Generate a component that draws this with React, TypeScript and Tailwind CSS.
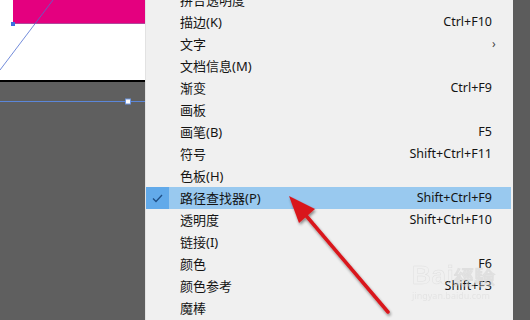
import React from "react";

type Item = { label: string; shortcut?: string; submenu?: boolean; active?: boolean };

const items: Item[] = [
  { label: "拼合透明度" },
  { label: "描边(K)", shortcut: "Ctrl+F10" },
  { label: "文字", submenu: true },
  { label: "文档信息(M)" },
  { label: "渐变", shortcut: "Ctrl+F9" },
  { label: "画板" },
  { label: "画笔(B)", shortcut: "F5" },
  { label: "符号", shortcut: "Shift+Ctrl+F11" },
  { label: "色板(H)" },
  { label: "路径查找器(P)", shortcut: "Shift+Ctrl+F9", active: true },
  { label: "透明度", shortcut: "Shift+Ctrl+F10" },
  { label: "链接(I)" },
  { label: "颜色", shortcut: "F6" },
  { label: "颜色参考", shortcut: "Shift+F3" },
  { label: "魔棒" },
];

const font = { fontFamily: '"Noto Sans", "Noto Sans CJK SC", sans-serif' };

export default function App() {
  return (
    <div className="relative flex w-[530px] h-[320px] overflow-hidden bg-[#5e5e5e]" style={font}>
      {/* canvas */}
      <div className="flex flex-col w-[145px] shrink-0">
        <div className="relative h-[80px] bg-white">
          <div className="absolute left-[13px] top-0 w-[132px] h-[24px] bg-[#e4007f] border-b border-[#b0479c]" />
          <svg className="absolute inset-0" width="145" height="80">
            <line x1="0" y1="70" x2="53" y2="0" stroke="#4f6fd1" strokeWidth="0.8" />
            <rect x="11" y="22" width="4" height="4" fill="#3d6fe0" />
          </svg>
        </div>
        <div className="h-[2px] bg-black" />
        <div className="relative flex-1 bg-[#5f5f5f]">
          <svg className="absolute inset-0" width="145" height="240">
            <line x1="0" y1="19.5" x2="145" y2="19.5" stroke="#5b86d8" strokeWidth="1" />
            <rect x="125.5" y="17" width="5" height="5" fill="#ffffff" stroke="#6d95e0" strokeWidth="1" />
          </svg>
        </div>
      </div>

      {/* menu */}
      <div className="w-[368px] shrink-0 bg-[#f0f0f0] border-l border-[#e2e2e2] text-[13px] text-[#141414]">
        <div className="-mt-[11px] pr-[2px]">
          {items.map((it) => (
            <div
              key={it.label}
              className={`flex items-center h-[22px] ${it.active ? "bg-[#99c9ef]" : ""}`}
            >
              <div
                className={`w-[23px] h-full flex items-center justify-center shrink-0 ${it.active ? "bg-[#62aaea]" : ""}`}
              >
                {it.active && (
                  <svg width="11" height="9" viewBox="0 0 11 9">
                    <path d="M1 4.5 L4 7.5 L10 1" fill="none" stroke="#1f4f86" strokeWidth="1.3" />
                  </svg>
                )}
              </div>
              <div className="pl-[11px] flex-1 leading-none whitespace-nowrap">{it.label}</div>
              <div className="pr-[19px] leading-none whitespace-nowrap text-[12.5px]">
                {it.shortcut}
                {it.submenu && <span className="inline-block mr-[-7px] text-[#444] text-[12px]">›</span>}
              </div>
            </div>
          ))}
        </div>
      </div>

      <div className="flex-1 bg-[#5c5c5c]" />

      {/* watermark */}
      <div className="absolute left-[412px] top-[262px] pointer-events-none select-none opacity-50 leading-none">
        <div className="text-[26px] font-bold tracking-wide" style={{ fontFamily: '"Liberation Sans", sans-serif', WebkitTextStroke: "0.5px #cfcfcf", color: "transparent" }}>
          Bai<span className="text-[20px]">經驗</span>
        </div>
        <div className="text-[9px] mt-[3px] text-[#d8d8d8]">jingyan.baidu.com</div>
      </div>

      {/* red arrow */}
      <svg className="absolute inset-0 pointer-events-none" width="530" height="320">
        <defs>
          <filter id="sh" x="-20%" y="-20%" width="140%" height="140%">
            <feGaussianBlur in="SourceAlpha" stdDeviation="1.5" />
            <feOffset dx="1" dy="1.5" result="b" />
            <feComponentTransfer>
              <feFuncA type="linear" slope="0.45" />
            </feComponentTransfer>
            <feMerge>
              <feMergeNode />
              <feMergeNode in="SourceGraphic" />
            </feMerge>
          </filter>
        </defs>
        <g filter="url(#sh)">
          <line x1="388" y1="312" x2="303" y2="212" stroke="#d9171b" strokeWidth="3.5" strokeLinecap="round" />
          <polygon points="289,196 315,209 299,223" fill="#d9171b" />
        </g>
      </svg>
    </div>
  );
}
